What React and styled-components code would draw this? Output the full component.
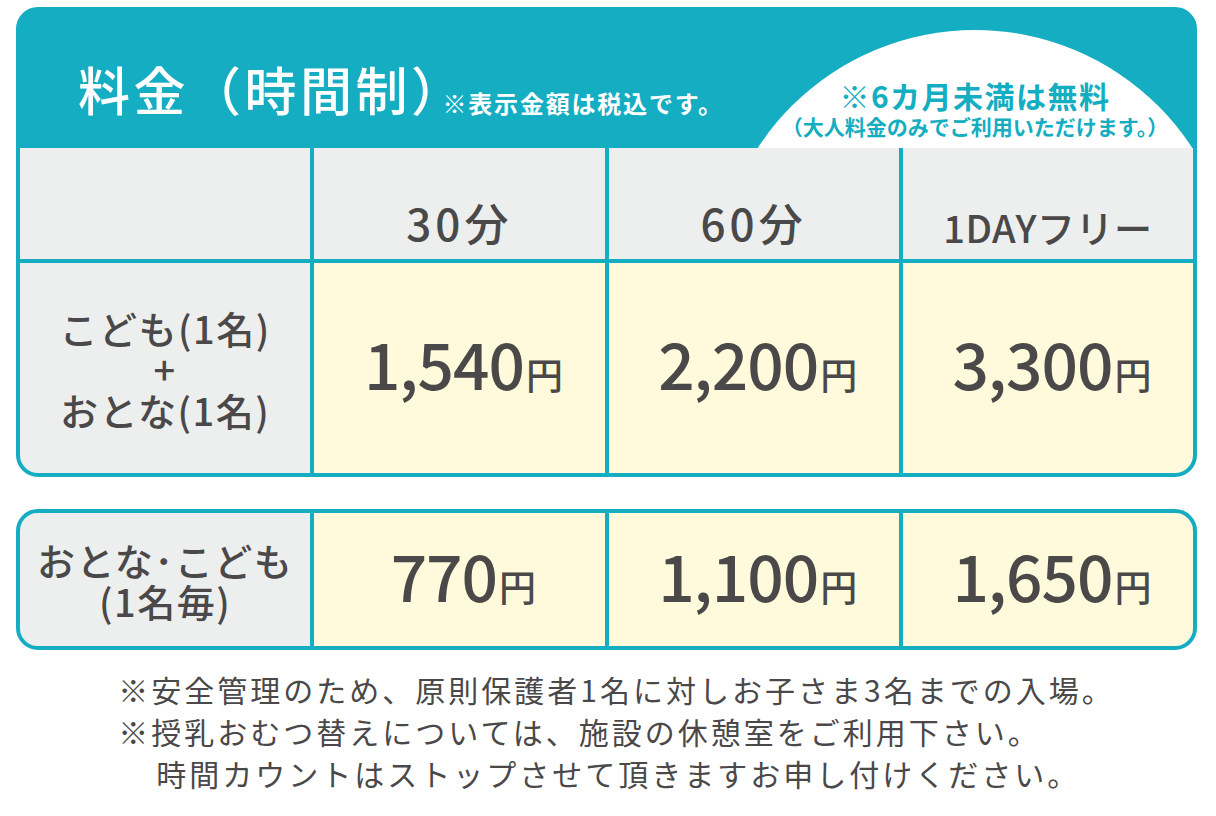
import React from "react";
import styled, { createGlobalStyle } from "styled-components";

const TEAL = "#14adc1";
const GREY = "#edefee";
const CREAM = "#fefadb";
const INK = "#4a4848";

const GlobalStyle = createGlobalStyle`
  html, body {
    margin: 0;
    padding: 0;
    background: #ffffff;
  }
  body {
    font-family: "Noto Sans CJK JP", "Noto Sans", sans-serif;
    color: ${INK};
  }
`;

const Page = styled.div`
  width: 1216px;
  padding: 7px 19px 0 16px;
  box-sizing: border-box;
`;

const PriceCard = styled.section`
  border: 4px solid ${TEAL};
  border-radius: 22px;
  background: ${TEAL};
  overflow: hidden;
  margin-top: ${({ $gap }) => $gap || 0}px;
`;

const CardHeader = styled.header`
  position: relative;
  height: 137px;
  display: flex;
  align-items: flex-end;
  padding: 0 0 33px 58px;
  box-sizing: border-box;
  overflow: hidden;
`;

const Title = styled.h1`
  margin: 0;
  font-size: 52px;
  font-weight: 500;
  color: #ffffff;
  letter-spacing: 3.5px;
  line-height: 1;
`;

const TaxNote = styled.span`
  font-size: 24px;
  font-weight: 700;
  color: #ffffff;
  letter-spacing: 1.8px;
  line-height: 1;
  margin-left: -24px;
`;

const FreeDome = styled.div`
  position: absolute;
  left: 696px;
  top: 19px;
  width: 518px;
  height: 518px;
  border-radius: 50%;
  background: #ffffff;
  display: flex;
  flex-direction: column;
  align-items: center;
  padding-top: 47px;
  box-sizing: border-box;
  color: ${TEAL};
  font-weight: 700;
`;

const DomeMain = styled.div`
  font-size: 30px;
  line-height: 36px;
  letter-spacing: 1.5px;
`;

const DomeSub = styled.div`
  font-size: 21px;
  line-height: 26px;
`;

const Grid = styled.div`
  display: grid;
  grid-template-columns: repeat(4, 1fr);
  grid-template-rows: ${({ $rows }) => $rows};
  gap: 4px;
  background: ${TEAL};
`;

const Cell = styled.div`
  display: flex;
  flex-direction: column;
  justify-content: ${({ $bottom }) => ($bottom ? "flex-end" : "center")};
  align-items: center;
  text-align: center;
  background: ${({ $tone }) => ($tone === "cream" ? CREAM : GREY)};
  padding-bottom: ${({ $bottom }) => ($bottom ? "8px" : "0")};
  box-sizing: border-box;
`;

const HeadText = styled.div`
  font-size: ${({ $small }) => ($small ? "38px" : "44px")};
  font-weight: 500;
  line-height: 1.3;
  letter-spacing: ${({ $small }) => ($small ? "0.5px" : "4px")};
`;

const LabelLine = styled.div`
  font-size: 38px;
  font-weight: 500;
  line-height: 41px;
  letter-spacing: 1.5px;
`;

const Price = styled.div`
  display: flex;
  align-items: baseline;
  padding: 0 0 12px 8px;
`;

const Amount = styled.span`
  font-size: 64px;
  font-weight: 500;
  letter-spacing: -1px;
`;

const Yen = styled.span`
  font-size: 37px;
  font-weight: 500;
  margin-left: 2px;
`;

const Notes = styled.div`
  width: max-content;
  margin: 18px auto 0;
  padding-left: 20px;
  font-size: 30px;
  line-height: 42px;
  letter-spacing: 3px;
`;

const NoteLine = styled.p`
  margin: 0;
  padding-left: ${({ $indent }) => ($indent ? "38px" : "0")};
`;

const durations = [
  { label: "30分" },
  { label: "60分" },
  { label: "1DAYフリー", small: true },
];

const pairPrices = ["1,540", "2,200", "3,300"];
const singlePrices = ["770", "1,100", "1,650"];

const PriceCell = ({ value }) => (
  <Cell $tone="cream">
    <Price>
      <Amount>{value}</Amount>
      <Yen>円</Yen>
    </Price>
  </Cell>
);

const App = () => (
  <Page>
    <GlobalStyle />
    <PriceCard>
      <CardHeader>
        <Title>料金（時間制）</Title>
        <TaxNote>※表示金額は税込です。</TaxNote>
        <FreeDome>
          <DomeMain>※6カ月未満は無料</DomeMain>
          <DomeSub>（大人料金のみでご利用いただけます。）</DomeSub>
        </FreeDome>
      </CardHeader>
      <Grid $rows="111px 210px">
        <Cell $bottom />
        {durations.map((d) => (
          <Cell key={d.label} $bottom>
            <HeadText $small={d.small}>{d.label}</HeadText>
          </Cell>
        ))}
        <Cell>
          <LabelLine>こども(1名)</LabelLine>
          <LabelLine>+</LabelLine>
          <LabelLine>おとな(1名)</LabelLine>
        </Cell>
        {pairPrices.map((p) => (
          <PriceCell key={p} value={p} />
        ))}
      </Grid>
    </PriceCard>

    <PriceCard $gap={32}>
      <Grid $rows="133px">
        <Cell>
          <LabelLine>おとな･こども</LabelLine>
          <LabelLine>(1名毎)</LabelLine>
        </Cell>
        {singlePrices.map((p) => (
          <PriceCell key={p} value={p} />
        ))}
      </Grid>
    </PriceCard>

    <Notes>
      <NoteLine>※安全管理のため、原則保護者1名に対しお子さま3名までの入場。</NoteLine>
      <NoteLine>※授乳おむつ替えについては、施設の休憩室をご利用下さい。</NoteLine>
      <NoteLine $indent>時間カウントはストップさせて頂きますお申し付けください。</NoteLine>
    </Notes>
  </Page>
);

export default App;
